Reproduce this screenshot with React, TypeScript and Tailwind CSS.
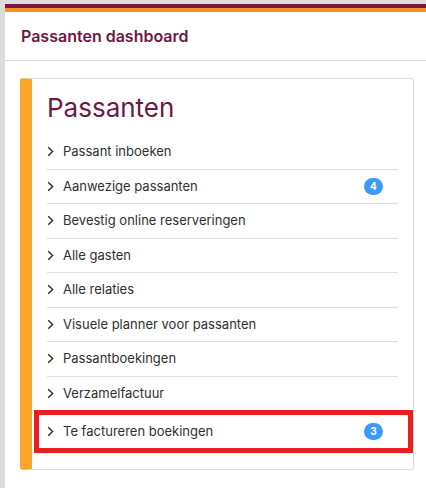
import { ReactNode } from "react";

const items: { label: string; badge?: number }[] = [
  { label: "Passant inboeken" },
  { label: "Aanwezige passanten", badge: 4 },
  { label: "Bevestig online reserveringen" },
  { label: "Alle gasten" },
  { label: "Alle relaties" },
  { label: "Visuele planner voor passanten" },
  { label: "Passantboekingen" },
  { label: "Verzamelfactuur" },
];

function Chevron() {
  return (
    <svg width="7" height="11" viewBox="0 0 7 11" className="shrink-0">
      <polyline points="1.2,1.2 5.6,5.5 1.2,9.8" fill="none" stroke="#2b2b2b" strokeWidth="1.4" />
    </svg>
  );
}

function Row({ label, badge, last }: { label: string; badge?: number; last?: boolean }) {
  return (
    <li className={`flex items-center ${last ? "h-[33px]" : "h-[34.5px] border-b border-[#dedede]"}`}>
      <Chevron />
      <span className="ml-[9px] text-[13px] text-[#2f2f2f]">{label}</span>
      {badge !== undefined && (
        <span className="ml-auto mr-[15px] flex items-center justify-center w-[19px] h-[17px] rounded-full bg-[#3d9bf7] text-white text-[10px] font-bold">
          {badge}
        </span>
      )}
    </li>
  );
}

function Highlight({ children }: { children: ReactNode }) {
  return <div className="-mt-[1px] -ml-[13px] -mr-[15px] border-[5px] border-[#ec1c24] pl-[8px] pr-[10px]">{children}</div>;
}

export default function App() {
  return (
    <div className="min-h-[488px] bg-[#dcdcdc] pt-[4px] pl-[5px]" style={{ fontFamily: "Inter, 'Noto Sans', sans-serif" }}>
      <div className="min-h-[484px] bg-white">
        <div className="h-[4px] bg-[#76174a]" />
        <div className="h-[4px] bg-[#f7941d]" />
        <div className="h-[49px] flex items-center px-[16px] border-b border-[#dcdcdc]">
          <h2 className="text-[16px] font-semibold text-[#6c1a45]">Passanten dashboard</h2>
        </div>
        <div className="mt-[17px] ml-[15px] mr-[12px] rounded-[3px] border border-[#dcdcdc] border-l-[12px] border-l-[#faa52b] px-[15px] pt-[12px] pb-[16px]">
          <h1 className="text-[26px] leading-[34px] text-[#6c1a45]">Passanten</h1>
          <ul className="mt-[10px]">
            {items.map((it) => (
              <Row key={it.label} label={it.label} badge={it.badge} />
            ))}
          </ul>
          <Highlight>
            <ul>
              <Row label="Te factureren boekingen" badge={3} last />
            </ul>
          </Highlight>
        </div>
      </div>
    </div>
  );
}
